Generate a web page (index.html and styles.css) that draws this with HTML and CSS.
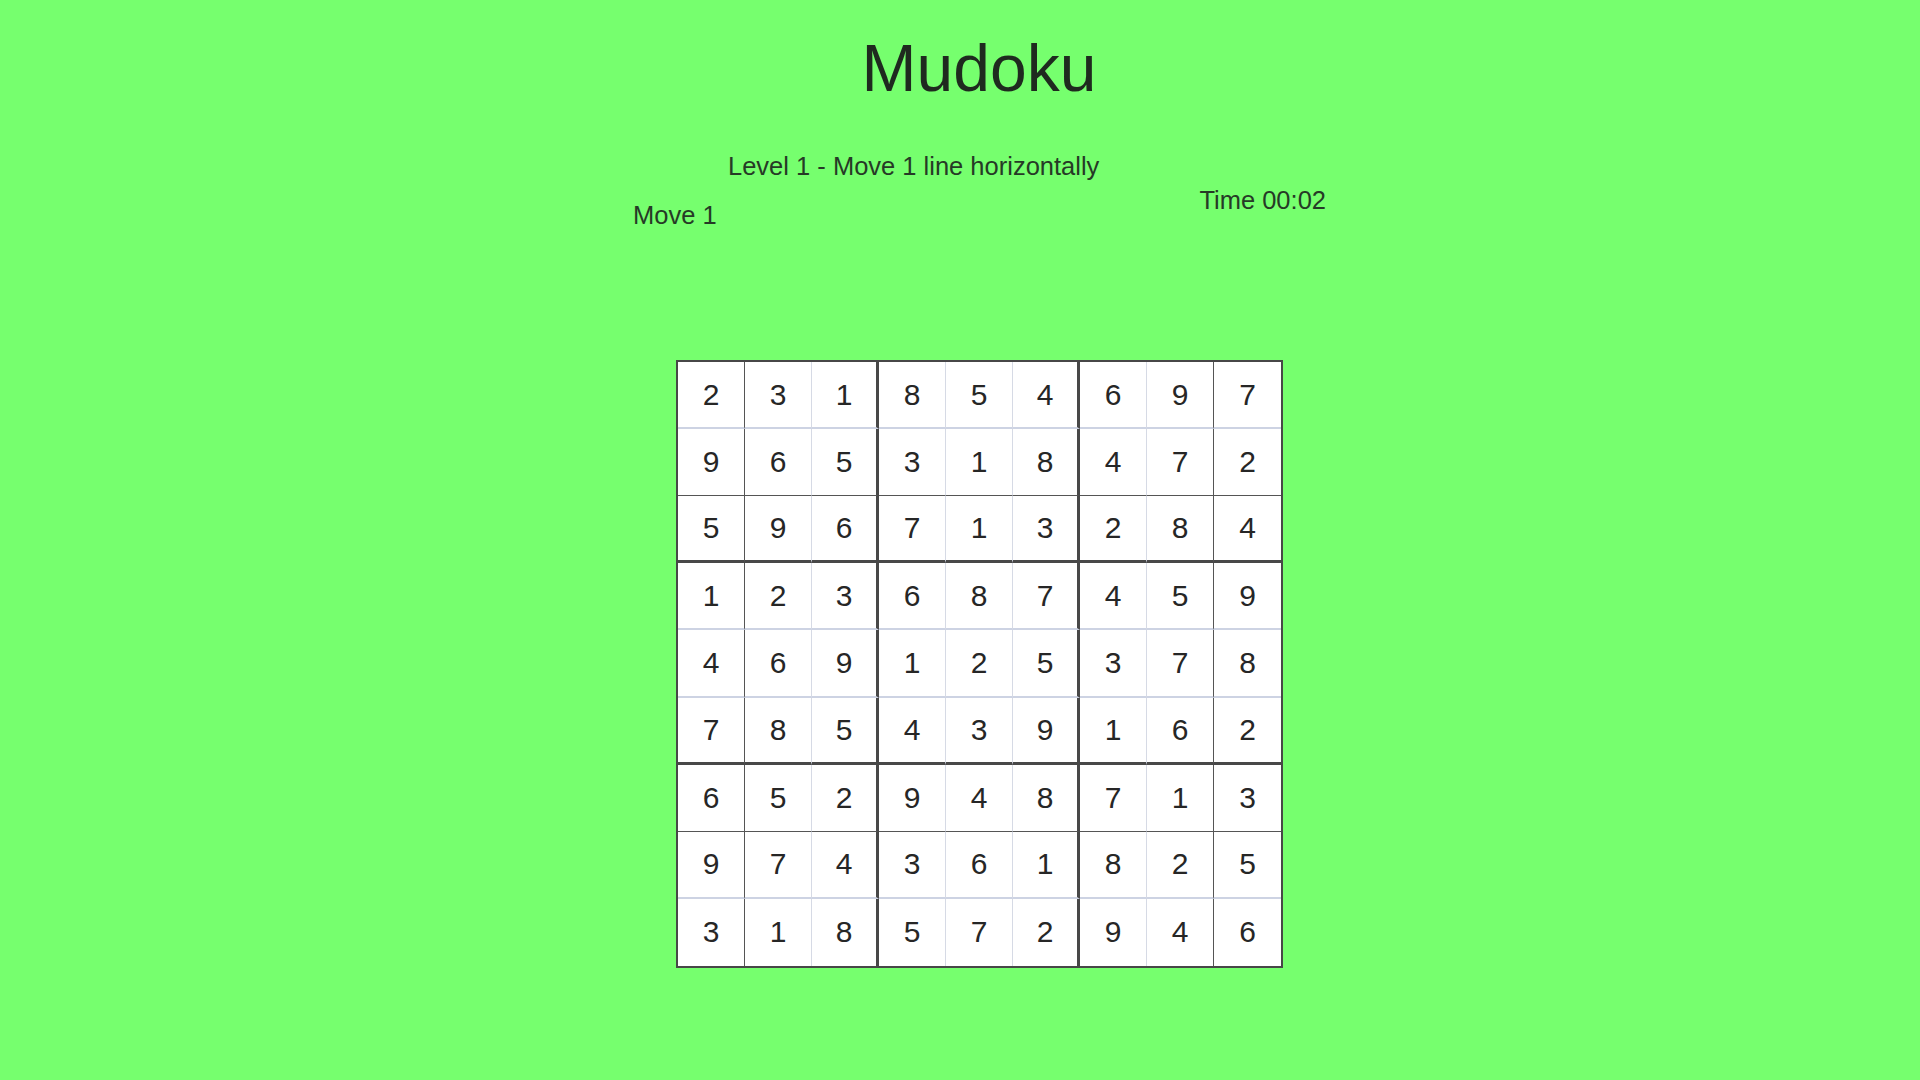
FILE: index.html
```html
<!DOCTYPE html>
<html lang="en">
<head>
<meta charset="utf-8">
<title>Mudoku</title>
<link rel="stylesheet" href="styles.css">
</head>
<body>
<div class="page">
  <div class="board-col">
    <h1 class="title">Mudoku</h1>
  </div>
  <div class="info">
    <div class="level">Level 1 - Move 1 line horizontally</div>
    <div class="stats">
      <div class="moves">Move 1</div>
      <div class="time">Time 00:02</div>
    </div>
  </div>
  <div class="board-col">
    <div class="grid">
      <div class="cell">2</div><div class="cell">3</div><div class="cell">1</div><div class="cell">8</div><div class="cell">5</div><div class="cell">4</div><div class="cell">6</div><div class="cell">9</div><div class="cell">7</div>
      <div class="cell">9</div><div class="cell">6</div><div class="cell">5</div><div class="cell">3</div><div class="cell">1</div><div class="cell">8</div><div class="cell">4</div><div class="cell">7</div><div class="cell">2</div>
      <div class="cell">5</div><div class="cell">9</div><div class="cell">6</div><div class="cell">7</div><div class="cell">1</div><div class="cell">3</div><div class="cell">2</div><div class="cell">8</div><div class="cell">4</div>
      <div class="cell">1</div><div class="cell">2</div><div class="cell">3</div><div class="cell">6</div><div class="cell">8</div><div class="cell">7</div><div class="cell">4</div><div class="cell">5</div><div class="cell">9</div>
      <div class="cell">4</div><div class="cell">6</div><div class="cell">9</div><div class="cell">1</div><div class="cell">2</div><div class="cell">5</div><div class="cell">3</div><div class="cell">7</div><div class="cell">8</div>
      <div class="cell">7</div><div class="cell">8</div><div class="cell">5</div><div class="cell">4</div><div class="cell">3</div><div class="cell">9</div><div class="cell">1</div><div class="cell">6</div><div class="cell">2</div>
      <div class="cell">6</div><div class="cell">5</div><div class="cell">2</div><div class="cell">9</div><div class="cell">4</div><div class="cell">8</div><div class="cell">7</div><div class="cell">1</div><div class="cell">3</div>
      <div class="cell">9</div><div class="cell">7</div><div class="cell">4</div><div class="cell">3</div><div class="cell">6</div><div class="cell">1</div><div class="cell">8</div><div class="cell">2</div><div class="cell">5</div>
      <div class="cell">3</div><div class="cell">1</div><div class="cell">8</div><div class="cell">5</div><div class="cell">7</div><div class="cell">2</div><div class="cell">9</div><div class="cell">4</div><div class="cell">6</div>
    </div>
  </div>
</div>
</body>
</html>
```

FILE: styles.css
```css
html, body {
  margin: 0;
  padding: 0;
}
body {
  width: 1920px;
  height: 1080px;
  background: #76ff6e;
  font-family: "Liberation Sans", Arial, sans-serif;
  overflow: hidden;
}
.page {
  display: flex;
  flex-direction: column;
  padding-top: 35px;
}
.board-col {
  width: 606px;
  margin-left: 676px;
}
.title {
  margin: 0;
  font-size: 66px;
  line-height: 66px;
  font-weight: normal;
  text-align: center;
  color: #1f2a1f;
}
.info {
  width: 696px;
  margin-left: 630px;
  margin-top: 53px;
  color: #263a26;
  font-size: 25.5px;
  line-height: 25.5px;
}
.level {
  padding-left: 98px;
}
.stats {
  display: flex;
  justify-content: space-between;
  align-items: flex-start;
  margin-top: 8px;
}
.moves {
  margin-top: 15px;
  padding-left: 3px;
}
.grid {
  margin-top: 132px;
  box-sizing: border-box;
  width: 607px;
  height: 608px;
  border: 2px solid #474747;
  background: #ffffff;
  display: grid;
  grid-template-columns: repeat(9, 1fr);
  grid-template-rows: repeat(9, 1fr);
}
.cell {
  box-sizing: border-box;
  display: flex;
  align-items: center;
  justify-content: center;
  font-size: 30px;
  color: #262626;
  border-right: 1px solid #d6dae5;
  border-bottom: 2px solid #cdd3e3;
}
/* columns */
.cell:nth-child(9n+1),
.cell:nth-child(9n+8) {
  border-right: 1px solid #555555;
}
.cell:nth-child(9n+3),
.cell:nth-child(9n+6) {
  border-right: 3px solid #484848;
}
.cell:nth-child(9n) {
  border-right: none;
}
/* rows */
.cell:nth-child(n+10):nth-child(-n+18),
.cell:nth-child(n+55):nth-child(-n+63) {
  border-bottom: 1px solid #555555;
}
.cell:nth-child(n+19):nth-child(-n+27),
.cell:nth-child(n+46):nth-child(-n+54) {
  border-bottom: 3px solid #484848;
}
.cell:nth-child(n+73) {
  border-bottom: none;
}
```
